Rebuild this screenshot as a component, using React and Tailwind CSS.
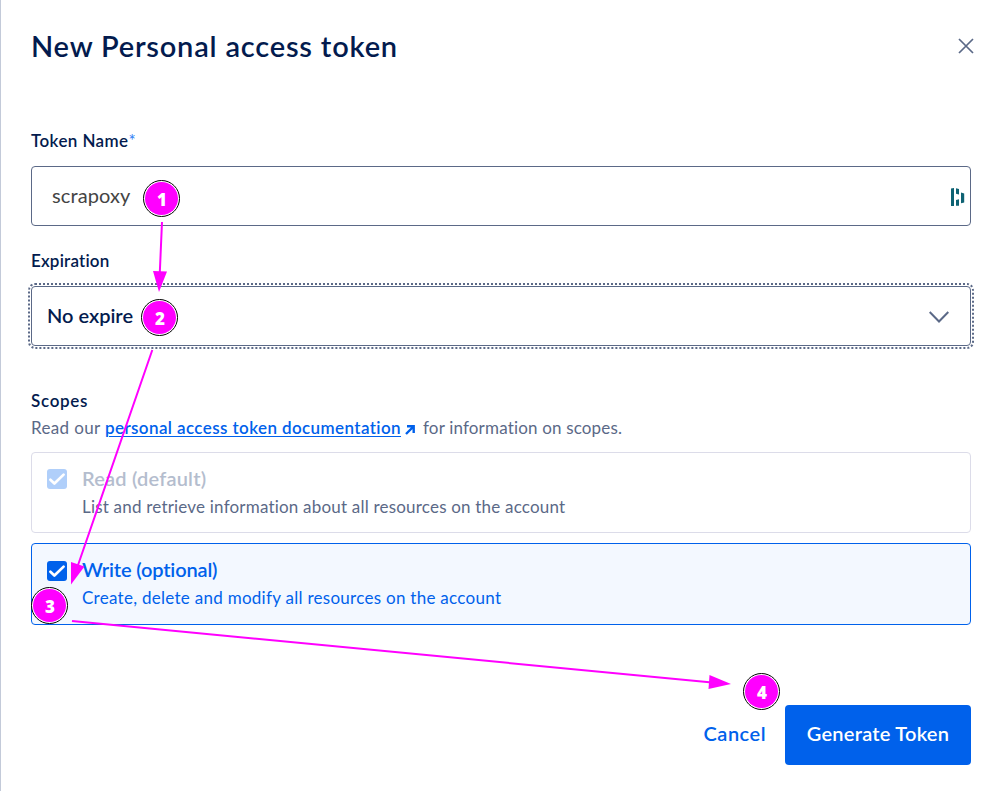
const badges = [
  { n: "1", place: "left-[143px] top-[180px]" },
  { n: "2", place: "left-[141px] top-[299px]" },
  { n: "3", place: "left-[31px] top-[587px]" },
  { n: "4", place: "left-[743px] top-[673px]" },
];

function Checkbox({ color }) {
  return (
    <span className={`flex h-5 w-5 shrink-0 rounded-[3px] ${color}`}>
      <svg viewBox="0 0 20 20" className="h-5 w-5" fill="none" stroke="#fff" strokeWidth="2.7" strokeLinecap="round" strokeLinejoin="round">
        <path d="M3.4 10.7 L7.4 14.5 L16.6 5.6" />
      </svg>
    </span>
  );
}

function Badge({ n, place }) {
  return (
    <span className={`absolute flex h-[37px] w-[37px] items-center justify-center rounded-full border-[1.5px] border-black bg-white ${place}`}>
      <span className="flex h-[33px] w-[33px] shrink-0 items-center justify-center rounded-full bg-[#ff00ff] pt-px pl-px font-['Open_Sans',sans-serif] text-[17px] leading-none font-extrabold text-white">
        {n}
      </span>
    </span>
  );
}

export default function App() {
  return (
    <div className="relative h-[791px] w-[996px] overflow-hidden border-l border-[#c3cad9] bg-white pr-[25px] pl-[30px] font-['Lato',sans-serif] whitespace-nowrap text-[#031b4e]">
      <header className="flex h-[92px] items-center justify-between">
        <h1 className="text-[29px] leading-[36px] font-semibold tracking-[0.8px]">New Personal access token</h1>
        <svg viewBox="0 0 16 16" className="mr-[-3px] h-4 w-4" fill="none" stroke="#5b6987" strokeWidth="1.7">
          <path d="M1 1 L15 15 M15 1 L1 15" />
        </svg>
      </header>

      <label className="mt-[37px] block h-[37px] text-[17px] leading-[24px] font-semibold tracking-[0.4px]">
        Token Name<span className="text-[#2f80f5] font-normal">*</span>
      </label>
      <div className="flex h-[60px] items-center justify-between rounded-[4px] border border-[#5b6987] pr-[5px] pl-5">
        <span className="pb-[3px] text-[20px] leading-[28px] tracking-[0.1px] text-[#444]">scrapoxy</span>
        <svg viewBox="0 0 14 18" className="mt-[2px] h-[18px] w-[14px]" fill="#0e6273">
          <path d="M0 .6 L3 0 V18 H0Z M5 .2 L8 1 V6.5 L5 5.8Z M5 12 L8 11.3 V17.8 H5Z M10 4.5 L13.2 5.4 V14.6 L10 15.2Z" />
        </svg>
      </div>

      <label className="mt-[23px] block h-[37px] text-[17px] leading-[24px] font-semibold tracking-[0.2px]">Expiration</label>
      <div className="flex h-[60px] items-center justify-between rounded-[4px] border border-[#5b6987] pr-[21px] pl-[15px] outline-2 outline-offset-1 outline-[#5b6987] outline-dotted">
        <span className="pb-[3px] text-[20px] leading-[28px] font-semibold tracking-[0px]">No expire</span>
        <svg viewBox="0 0 20 12" className="mt-[2px] h-3 w-5" fill="none" stroke="#5b6987" strokeWidth="2">
          <path d="M.7 1 L10 10.5 L19.3 1" />
        </svg>
      </div>

      <h2 className="mt-[43px] text-[17px] leading-[24px] font-semibold tracking-[0.7px]">Scopes</h2>
      <p className="mt-[3px] flex h-[24px] items-center text-[17px] leading-[24px] text-[#5b6987]">
        <span className="w-[74px] tracking-[0.35px]">Read our</span>
        <a className="font-semibold tracking-[0.4px] text-[#0061eb] underline decoration-1 underline-offset-2">personal access token documentation</a>
        <svg viewBox="0 0 10 10" className="mt-[3px] mr-[8px] ml-[4px] h-[10px] w-[10px]" fill="none" stroke="#0061eb" strokeWidth="2.4">
          <path d="M2 1.3 H8.7 V8 M8.5 1.5 L1 9" />
        </svg>
        <span className="tracking-[0.17px]">for information on scopes.</span>
      </p>

      <section className="mt-[12px] flex h-[81px] gap-[15px] rounded-[4px] border border-[#dcdce9] pt-4 pl-[15px]">
        <Checkbox color="bg-[#b0cffa]" />
        <div className="-mt-[5px]">
          <h3 className="text-[20px] leading-[28px] font-semibold tracking-[0.2px] text-[#b4bdce]">Read (default)</h3>
          <p className="mt-px text-[17px] leading-[28px] tracking-[0.2px] text-[#5b6987]">List and retrieve information about all resources on the account</p>
        </div>
      </section>
      <section className="mt-[10px] flex h-[82px] gap-[15px] rounded-[4px] border border-[#0061eb] bg-[#f3f8ff] pt-[17px] pl-[15px]">
        <Checkbox color="bg-[#0061eb]" />
        <div className="-mt-[6px] text-[#0061eb]">
          <h3 className="text-[20px] leading-[28px] font-semibold tracking-[-0.15px]">Write (optional)</h3>
          <p className="mt-px text-[17px] leading-[28px] tracking-[0.28px]">Create, delete and modify all resources on the account</p>
        </div>
      </section>

      <footer className="mt-[80px] flex justify-end text-[20px] font-semibold">
        <button className="mr-[19px] h-[60px] pb-[4px] tracking-[0.5px] text-[#0061eb]">Cancel</button>
        <button className="h-[60px] w-[186px] rounded-[4px] bg-[#0061eb] pb-[4px] tracking-[0.25px] text-white">Generate Token</button>
      </footer>

      <svg viewBox="0 0 996 791" className="pointer-events-none absolute top-0 -left-px h-[791px] w-[996px]" fill="#ff00ff" stroke="none">
        <path d="M162 222 L159.7 275 M152.3 350 L77 568 M72 621 L712 682.5" stroke="#ff00ff" strokeWidth="2" fill="none" />
        <path d="M153 271 L167 271.4 L159 292Z M71 562 L84.5 566.5 L71 584.5Z M709.5 675 L708.5 689 L731 684Z" />
      </svg>
      <div className="absolute top-0 -left-px">
        {badges.map((b) => (
          <Badge key={b.n} {...b} />
        ))}
      </div>
    </div>
  );
}
